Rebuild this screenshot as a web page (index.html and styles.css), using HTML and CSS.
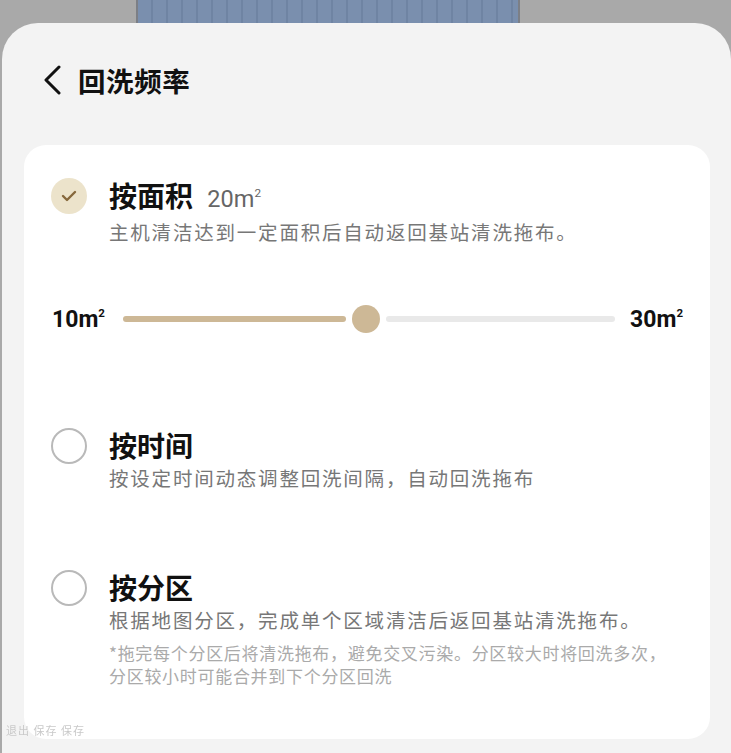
FILE: index.html
```html
<!DOCTYPE html>
<html lang="zh-CN">
  <head>
    <meta charset="UTF-8" />
    <meta name="viewport" content="width=device-width, initial-scale=1.0" />
    <title>回洗频率</title>
    <link rel="stylesheet" href="styles.css">
  </head>
  <body>
    <div class="foto"><div class="peta"></div></div>
    <div class="lembar">
      <div class="kepala">
        <svg class="kembali" width="20" height="30" viewBox="0 0 20 30">
          <polyline points="15,2 2,15 15,28" fill="none" stroke="#111" stroke-width="3" stroke-linecap="round" stroke-linejoin="round" />
        </svg>
        <h1>回洗频率</h1>
      </div>
      <div class="kartu">
        <div class="opsi">
          <span class="pilih aktif">
            <svg width="16" height="12" viewBox="0 0 16 12">
              <polyline points="2,6 6,10 14,2" fill="none" stroke="#86683c" stroke-width="2.4" stroke-linecap="round" stroke-linejoin="round" />
            </svg>
          </span>
          <div class="isi">
            <div class="judul">按面积 <span class="nilai">20m<sup>2</sup></span></div>
            <div class="ket">主机清洁达到一定面积后自动返回基站清洗拖布。</div>
          </div>
        </div>
        <div class="slider">
          <span class="angka">10m<sup>2</sup></span>
          <div class="jalur">
            <span class="isi-jalur"></span>
            <span class="tombol"></span>
            <span class="sisa-jalur"></span>
          </div>
          <span class="angka">30m<sup>2</sup></span>
        </div>
        <div class="opsi opsi-waktu">
          <span class="pilih"></span>
          <div class="isi">
            <div class="judul">按时间</div>
            <div class="ket">按设定时间动态调整回洗间隔，自动回洗拖布</div>
          </div>
        </div>
        <div class="opsi opsi-zona">
          <span class="pilih"></span>
          <div class="isi">
            <div class="judul">按分区</div>
            <div class="ket">根据地图分区，完成单个区域清洁后返回基站清洗拖布。</div>
            <div class="catatan">*拖完每个分区后将清洗拖布，避免交叉污染。分区较大时将回洗多次，<br>分区较小时可能合并到下个分区回洗</div>
          </div>
        </div>
      </div>
      <span class="tanda">退出 保存 保存</span>
    </div>
  </body>
</html>
```

FILE: styles.css
```css
* { box-sizing: border-box }
body {
  margin: 0;
  width: 731px;
  height: 753px;
  overflow: hidden;
  background: #a9a9a9;
  font-family: "Noto Sans CJK SC", "Noto Sans", sans-serif;
}
.foto { height: 23px }
.peta {
  margin-left: 136px;
  width: 384px;
  height: 23px;
  border-left: 2px solid #7c7f86;
  border-right: 2px solid #7c7f86;
  background: repeating-linear-gradient(90deg, #7a8fae 0 13px, #6f84a3 13px 15px);
}
.lembar {
  position: relative;
  margin-left: 2px;
  height: 730px;
  background: #f3f3f3;
  border-radius: 36px 36px 0 0;
  padding-top: 30px;
}
.kepala {
  display: flex;
  align-items: center;
  gap: 14px;
  height: 54px;
  padding-left: 42px;
  margin-bottom: 38px;
}
.kepala h1 {
  margin: 0;
  font-size: 27.5px;
  font-weight: 700;
  color: #111;
  letter-spacing: 0.6px;
}
.kartu {
  margin: 0 21px 0 22px;
  height: 594px;
  background: #fff;
  border-radius: 22px;
  padding: 31px 27px 0 27px;
}
.opsi {
  display: flex;
  gap: 22px;
}
.pilih {
  flex: none;
  width: 36px;
  height: 36px;
  margin-top: 2px;
  border-radius: 50%;
  border: 2.5px solid #b9b9b9;
  display: flex;
  align-items: center;
  justify-content: center;
}
.pilih.aktif {
  border: none;
  background: #ece3cb;
}
.judul {
  font-size: 28px;
  line-height: 38px;
  font-weight: 700;
  color: #111;
}
.nilai {
  margin-left: 8px;
  font-family: Roboto, "Noto Sans", sans-serif;
  font-size: 23.5px;
  font-weight: 400;
  color: #666;
}
sup { font-size: 0.5em; vertical-align: 0.85em; line-height: 0 }
.ket {
  font-size: 19.5px;
  line-height: 27px;
  color: #777;
  letter-spacing: 1.8px;
}
.catatan {
  margin-top: 8px;
  font-size: 17px;
  line-height: 23px;
  color: #aaa;
  letter-spacing: 0.7px;
}
.slider {
  display: flex;
  align-items: center;
  height: 40px;
  margin-top: 54px;
  margin-left: 1px;
}
.angka {
  font-family: Roboto, "Noto Sans", sans-serif;
  font-size: 23px;
  font-weight: 700;
  color: #111;
}
.jalur {
  flex: 1;
  display: flex;
  align-items: center;
  gap: 6px;
  margin: 0 15px 0 18px;
}
.isi-jalur, .sisa-jalur {
  height: 6px;
  border-radius: 3px;
}
.isi-jalur { width: 223px; background: #cdb896 }
.sisa-jalur { flex: 1; background: #e9e9e9 }
.tombol {
  width: 28px;
  height: 28px;
  border-radius: 50%;
  background: #cdb896;
}
.opsi-waktu { margin-top: 87px }
.opsi-zona { margin-top: 77px }
.tanda {
  position: absolute;
  left: 4px;
  bottom: 15px;
  font-size: 11px;
  color: #c9c9c9;
  filter: blur(0.6px);
  letter-spacing: 1px;
}
```
